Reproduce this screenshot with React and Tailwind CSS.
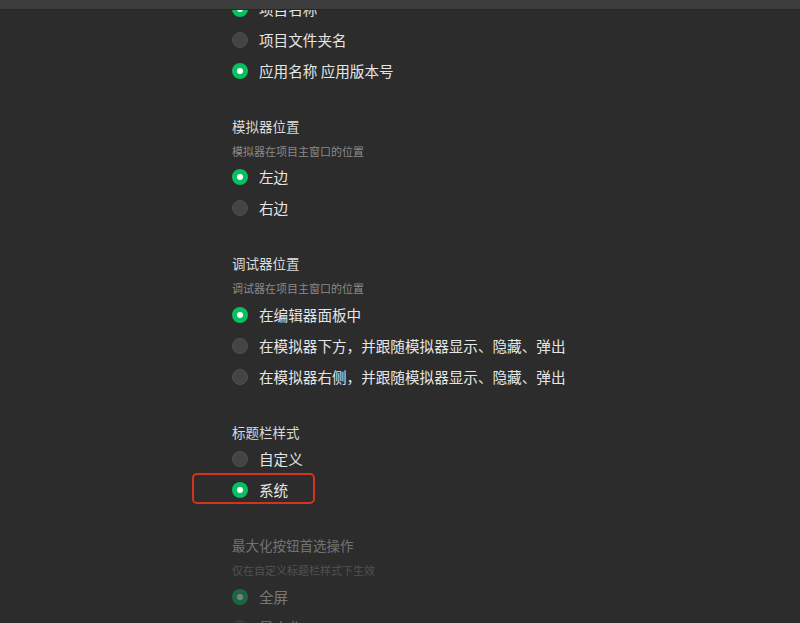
const font = { fontFamily: '"Noto Sans CJK SC", "Noto Sans", sans-serif' }

function Radio({ checked }) {
  return checked ? (
    <span className="w-4 h-4 rounded-full bg-[#07c160] flex items-center justify-center shrink-0">
      <span className="w-[6px] h-[6px] rounded-full bg-white" />
    </span>
  ) : (
    <span className="w-4 h-4 rounded-full bg-[#444444] border border-[#505050] shrink-0" />
  )
}

function Option({ label, checked, marked }) {
  return (
    <div className="relative h-[31px] flex items-center gap-[11px]">
      <Radio checked={checked} />
      <span className="text-[14.6px] text-[#e6e6e6]">{label}</span>
      {marked && (
        <div className="absolute left-[-40px] top-[-1.5px] w-[123px] h-[31px] border-[2.5px] border-[#d2341f] rounded-[5px]" />
      )}
    </div>
  )
}

function Section({ title, desc, options, disabled }) {
  return (
    <div className={`mt-[29.5px] ${disabled ? 'opacity-40' : ''}`}>
      <div className="h-[20px] leading-[20px] text-[13.5px] text-[#dadada]">{title}</div>
      {desc ? (
        <>
          <div className="mt-[7px] h-[16px] leading-[16px] text-[11px] text-[#8a8a8a]">{desc}</div>
          <div className="mt-[3px]" />
        </>
      ) : (
        <div className="mt-[2px]" />
      )}
      {options.map((o) => (
        <Option key={o.label} {...o} />
      ))}
    </div>
  )
}

export default function App() {
  return (
    <div className="relative w-[800px] h-[623px] overflow-hidden bg-[#2c2c2c]" style={font}>
      {/* top bar */}
      <div className="absolute top-0 left-0 right-0 h-[10px] bg-[#3c3c3c] border-b border-[#262626] z-10" />

      <div className="pl-[232px] mt-[-7px]">
        <Option label="项目名称" checked />
        <Option label="项目文件夹名" />
        <Option label="应用名称 应用版本号" checked />

        <Section
          title="模拟器位置"
          desc="模拟器在项目主窗口的位置"
          options={[{ label: '左边', checked: true }, { label: '右边' }]}
        />
        <Section
          title="调试器位置"
          desc="调试器在项目主窗口的位置"
          options={[
            { label: '在编辑器面板中', checked: true },
            { label: '在模拟器下方，并跟随模拟器显示、隐藏、弹出' },
            { label: '在模拟器右侧，并跟随模拟器显示、隐藏、弹出' }
          ]}
        />
        <Section
          title="标题栏样式"
          options={[{ label: '自定义' }, { label: '系统', checked: true, marked: true }]}
        />
        <Section
          title="最大化按钮首选操作"
          desc="仅在自定义标题栏样式下生效"
          disabled
          options={[{ label: '全屏', checked: true }, { label: '最大化' }]}
        />
      </div>
    </div>
  )
}
